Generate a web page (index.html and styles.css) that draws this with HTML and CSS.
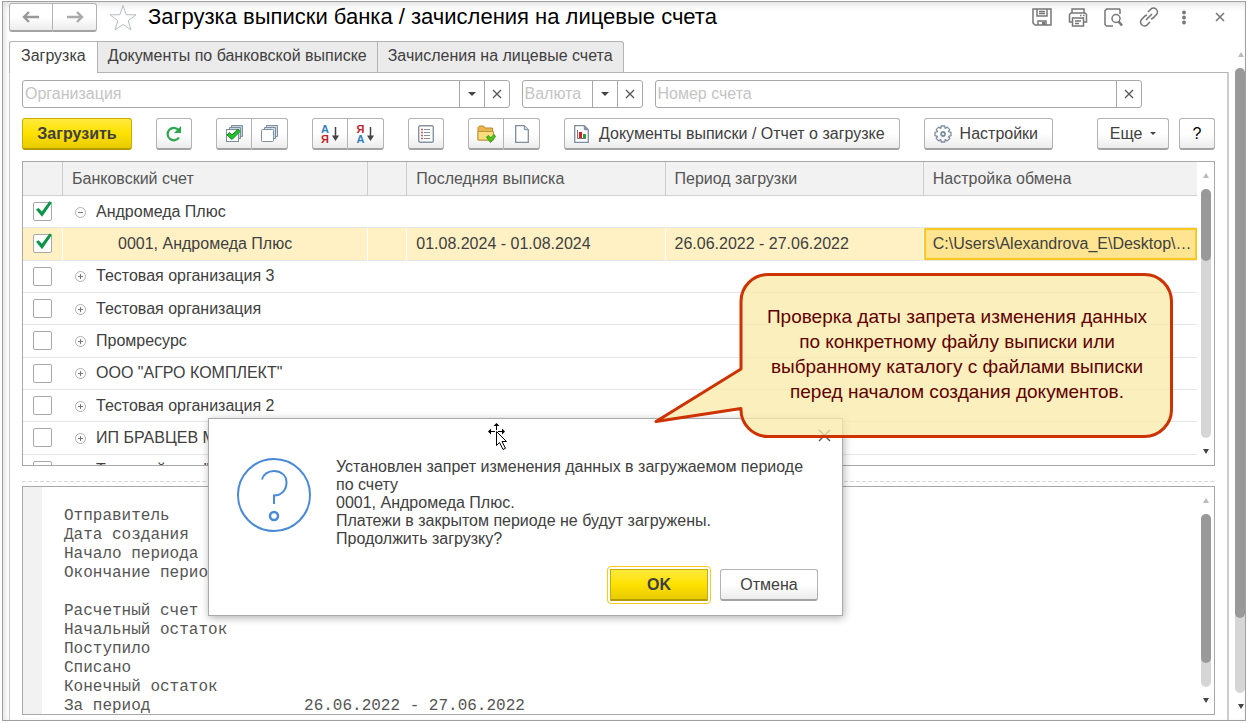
FILE: index.html
```html
<!DOCTYPE html>
<html lang="ru">

<head>
    <meta charset="UTF-8">
    <meta name="viewport" content="width=device-width, initial-scale=1.0">
    <title>Загрузка выписки банка</title>
    <link rel="stylesheet" href="styles.css">
</head>

<body>
    <div class="window">
        <header class="titlebar">
            <div class="group nav">
                <button class="btn" aria-label="Назад"><svg width="18" height="12" viewBox="0 0 18 12"><path d="M7 1L2 6l5 5M2 6h15" fill="none" stroke="#999" stroke-width="2.4"/></svg></button>
                <button class="btn" aria-label="Вперед"><svg width="18" height="12" viewBox="0 0 18 12"><path d="M11 1l5 5-5 5M16 6H1" fill="none" stroke="#aaa" stroke-width="2.4"/></svg></button>
            </div>
            <button class="icon star" aria-label="В избранное"><svg width="28" height="27" viewBox="0 0 28 27"><path d="M14 1.5l3.2 9.2 9.8.1-7.8 5.8 2.8 9.4-8-5.6L6 26l2.800-9.400L1 10.800l9.800-.1z" fill="#fff" stroke="#b4bcc4"/></svg></button>
            <h1>Загрузка выписки банка / зачисления на лицевые счета</h1>
            <div class="tools">
                <button class="icon" aria-label="Сохранить"><svg width="20" height="18" viewBox="0 0 20 18" fill="none" stroke="#777" stroke-width="1.5"><path d="M1 1h18v16H3l-2-2z"/><path d="M5 1v7h10V1M7 3.500h6M7 5.500h6M6 17v-4h8v4"/><path d="M10 14h3v3h-3z" fill="#777" stroke="none"/></svg></button>
                <button class="icon" aria-label="Печать"><svg width="20" height="19" viewBox="0 0 20 19" fill="none" stroke="#777" stroke-width="1.500"><path d="M4 5V1h12v4M4 14H1.500V6.500L3 5h14l1.500 1.500V14H16"/><path d="M4.500 10h11v8h-11zM7 13h6M7 15.500h4M12 7.500h1.500M15 7.500h1.500"/></svg></button>
                <button class="icon" aria-label="Просмотр"><svg width="19" height="19" viewBox="0 0 19 19" fill="none" stroke="#777" stroke-width="1.500"><path d="M9 18H2.500L1 16.500v-14L2.500 1h13L16 2v4"/><circle cx="12" cy="10.500" r="4"/><path d="M14.500 13.500l3.500 4" stroke-width="2.500"/></svg></button>
                <button class="icon" aria-label="Ссылка"><svg width="20" height="20" viewBox="0 0 20 20" fill="none" stroke="#777" stroke-width="1.600"><path d="M9 5l2.500-2.500a3.600 3.600 0 0 1 6 5L14 11l-2 1M11 15l-2.500 2.500a3.600 3.600 0 0 1-6-5L6 9l2-1M7 13l6-6"/></svg></button>
                <button class="icon dots" aria-label="Меню"><svg width="6" height="15" viewBox="0 0 6 15" fill="#777"><circle cx="3" cy="2.500" r="1.900"/><circle cx="3" cy="7.500" r="1.900"/><circle cx="3" cy="12.500" r="1.900"/></svg></button>
                <button class="icon close" aria-label="Закрыть"><svg width="10" height="10" viewBox="0 0 10 10"><path d="M1 1l8 8M9 1L1 9" stroke="#777" stroke-width="1.600"/></svg></button>
            </div>
        </header>

        <div class="page">
            <main class="content">
                <div class="tabs" role="tablist">
                    <button class="tab active" role="tab" aria-selected="true">Загрузка</button>
                    <button class="tab" role="tab">Документы по банковской выписке</button>
                    <button class="tab" role="tab">Зачисления на лицевые счета</button>
                </div>
                <section class="panel">
                    <div class="filters">
                        <div class="field wide">
                            <input type="text" placeholder="Организация" aria-label="Организация">
                            <button aria-label="Выбрать организацию"><i class="caret"></i></button>
                            <button aria-label="Очистить организацию"><svg width="10" height="10" viewBox="0 0 10 10"><path d="M1 1l8 8M9 1L1 9" stroke="#555" stroke-width="1.300"/></svg></button>
                        </div>
                        <div class="field">
                            <input type="text" placeholder="Валюта" aria-label="Валюта">
                            <button aria-label="Выбрать валюту"><i class="caret"></i></button>
                            <button aria-label="Очистить валюту"><svg width="10" height="10" viewBox="0 0 10 10"><path d="M1 1l8 8M9 1L1 9" stroke="#555" stroke-width="1.300"/></svg></button>
                        </div>
                        <div class="field wide">
                            <input type="text" placeholder="Номер счета" aria-label="Номер счета">
                            <button aria-label="Очистить номер счета"><svg width="10" height="10" viewBox="0 0 10 10"><path d="M1 1l8 8M9 1L1 9" stroke="#555" stroke-width="1.300"/></svg></button>
                        </div>
                    </div>

                    <div class="toolbar">
                        <button class="btn primary load">Загрузить</button>
                        <button class="btn square" aria-label="Обновить"><svg width="18" height="18" viewBox="0 0 18 18"><path d="M14 12.500A6.200 6.200 0 1 1 13.500 5" fill="none" stroke="#2ba84a" stroke-width="2.200"/><path d="M16 1v7H9z" fill="#2ba84a"/></svg></button>
                        <div class="group">
                            <button class="btn square" aria-label="Отметить все"><svg width="19" height="19" viewBox="0 0 19 19"><path d="M6.500 4V1.500h11v11H15M4.500 6V3.500h11v11H13" fill="#c6d2dc" stroke="#7d8e9e"/><rect x="1.500" y="5.500" width="12" height="12" fill="#fff" stroke="#7d8e9e"/><path d="M2 11l2.500-2.500L7 11l6-6 2 2.500-8 8z" fill="#1fc32a" stroke="#14851c"/></svg></button>
                            <button class="btn square" aria-label="Снять отметки"><svg width="19" height="19" viewBox="0 0 19 19"><path d="M6.500 4V1.500h11v11H15M4.500 6V3.500h11v11H13" fill="#d5dde4" stroke="#7d8e9e"/><rect x="1.500" y="5.500" width="12" height="12" rx="1" fill="#fff" stroke="#7d8e9e"/></svg></button>
                        </div>
                        <div class="group">
                            <button class="btn square sort" aria-label="Сортировать по возрастанию"><span><b>А</b><b class="red">Я</b></span><svg width="7" height="14" viewBox="0 0 7 14"><path d="M3.500 0v12" stroke="#444" stroke-width="1.500"/><path d="M0 8.500h7L3.500 14z" fill="#444"/></svg></button>
                            <button class="btn square sort" aria-label="Сортировать по убыванию"><span><b class="red">Я</b><b>А</b></span><svg width="7" height="14" viewBox="0 0 7 14"><path d="M3.500 0v12" stroke="#444" stroke-width="1.500"/><path d="M0 8.500h7L3.500 14z" fill="#444"/></svg></button>
                        </div>
                        <button class="btn square" aria-label="Список"><svg width="16" height="18" viewBox="0 0 16 18"><rect x=".7" y=".7" width="14.600" height="16.600" rx="1.500" fill="#fff" stroke="#8494a4" stroke-width="1.400"/><path d="M6 4.500h6M6 7.500h6M6 10.500h6M6 13.500h6" stroke="#8494a4"/><path d="M3 4.500h2M3 7.500h2M3 10.500h2M3 13.500h2" stroke="#e0525a" stroke-width="1.300"/></svg></button>
                        <div class="group">
                            <button class="btn square" aria-label="Выбрать файл"><svg width="19" height="18" viewBox="0 0 19 18"><path d="M1 15V2.500L2.500 1h4L8 3h7.500v12z" fill="#e9b64b" stroke="#b98a2b"/><path d="M1 15V6.500h15.500V15z" fill="#fbdc7e" stroke="#c0963a"/><path d="M9.500 12l2-1.500 2 2.500 3.500-3.500 1.500 2-5 6z" fill="#4cc417" stroke="#2f9a0e"/></svg></button>
                            <button class="btn square" aria-label="Новый документ"><svg width="14" height="18" viewBox="0 0 14 18"><path d="M.7.7h8.600l4 4v12.600H.7z" fill="#fff" stroke="#7d8e9e" stroke-width="1.300"/><path d="M9.300.7v4h4" fill="#d5dde4" stroke="#7d8e9e"/></svg></button>
                        </div>
                        <button class="btn text"><svg width="15" height="18" viewBox="0 0 15 18"><path d="M.7.7h9.600l4 4v12.600H.7z" fill="#fff" stroke="#7d8e9e" stroke-width="1.300"/><path d="M10.300.7v4h4" fill="#8494a4" stroke="#7d8e9e"/><path d="M5 7h3v6H5z" fill="#e01b24"/><path d="M9 9h3v4H9z" fill="#2ea043"/><path d="M3.500 5v8.500H12" fill="none" stroke="#777"/></svg>Документы выписки / Отчет о загрузке</button>
                        <button class="btn text settings"><svg width="18" height="18" viewBox="0 0 18 18" fill="none" stroke="#7d8e9e" stroke-width="1.300"><path d="M7.300 1h3.400l.5 2.400 2.100-1.300 2.500 2.500-1.300 2.100 2.500.6v3.400l-2.500.6 1.300 2.100-2.500 2.500-2.100-1.300-.5 2.400H7.300l-.5-2.400-2.100 1.300-2.500-2.500 1.300-2.100L1 10.700V7.300l2.500-.6-1.300-2.100 2.500-2.500 2.100 1.300z" stroke-linejoin="round"/><circle cx="9" cy="9" r="2" stroke-width="1.800"/></svg>Настройки</button>
                        <button class="btn more">Еще <i class="caret small"></i></button>
                        <button class="btn square help">?</button>
                    </div>

                    <div class="pane list">
                        <div class="view">
                            <table>
                                <colgroup>
                                    <col class="c-check">
                                    <col class="c-account">
                                    <col class="c-mark">
                                    <col class="c-date">
                                    <col class="c-date">
                                    <col>
                                </colgroup>
                                <thead>
                                    <tr>
                                        <th></th>
                                        <th>Банковский счет</th>
                                        <th></th>
                                        <th>Последняя выписка</th>
                                        <th>Период загрузки</th>
                                        <th>Настройка обмена</th>
                                    </tr>
                                </thead>
                                <tbody>
                                    <tr>
                                        <td class="check"><input type="checkbox" aria-label="Андромеда Плюс" checked></td>
                                        <td colspan="5"><button class="toggle open" aria-label="Свернуть"></button>Андромеда Плюс</td>
                                    </tr>
                                    <tr class="selected">
                                        <td class="check"><input type="checkbox" aria-label="0001, Андромеда Плюс" checked></td>
                                        <td class="child">0001, Андромеда Плюс</td>
                                        <td></td>
                                        <td>01.08.2024 - 01.08.2024</td>
                                        <td>26.06.2022 - 27.06.2022</td>
                                        <td class="current">C:\Users\Alexandrova_E\Desktop\…</td>
                                    </tr>
                                    <tr>
                                        <td class="check"><input type="checkbox" aria-label="Тестовая организация 3"></td>
                                        <td colspan="5"><button class="toggle" aria-label="Развернуть"></button>Тестовая организация 3</td>
                                    </tr>
                                    <tr>
                                        <td class="check"><input type="checkbox" aria-label="Тестовая организация"></td>
                                        <td colspan="5"><button class="toggle" aria-label="Развернуть"></button>Тестовая организация</td>
                                    </tr>
                                    <tr>
                                        <td class="check"><input type="checkbox" aria-label="Промресурс"></td>
                                        <td colspan="5"><button class="toggle" aria-label="Развернуть"></button>Промресурс</td>
                                    </tr>
                                    <tr>
                                        <td class="check"><input type="checkbox" aria-label="ООО АГРО КОМПЛЕКТ"></td>
                                        <td colspan="5"><button class="toggle" aria-label="Развернуть"></button>ООО "АГРО КОМПЛЕКТ"</td>
                                    </tr>
                                    <tr>
                                        <td class="check"><input type="checkbox" aria-label="Тестовая организация 2"></td>
                                        <td colspan="5"><button class="toggle" aria-label="Развернуть"></button>Тестовая организация 2</td>
                                    </tr>
                                    <tr>
                                        <td class="check"><input type="checkbox" aria-label="ИП БРАВЦЕВ"></td>
                                        <td colspan="5"><button class="toggle" aria-label="Развернуть"></button>ИП БРАВЦЕВ М</td>
                                    </tr>
                                    <tr>
                                        <td class="check"><input type="checkbox" aria-label="Торговый дом"></td>
                                        <td colspan="5"><button class="toggle" aria-label="Развернуть"></button>Торговый дом "</td>
                                    </tr>
                                </tbody>
                            </table>
                        </div>
                        <div class="scroll">
                            <i class="up"></i>
                            <div class="track"><div class="thumb" style="height: 29%"></div></div>
                            <i class="down"></i>
                        </div>
                    </div>

                    <div class="splitter"></div>

                    <div class="pane report">
                        <div class="gutter"></div>
                        <pre>Отправитель
Дата создания
Начало периода
Окончание периода

Расчетный счет
Начальный остаток
Поступило
Списано
Конечный остаток
За период                26.06.2022 - 27.06.2022</pre>
                        <div class="scroll">
                            <i class="up"></i>
                            <div class="track"><div class="thumb" style="height: 86%"></div></div>
                            <i class="down"></i>
                        </div>
                    </div>
                </section>
            </main>
            <div class="scroll outer">
                <i class="up"></i>
                <div class="track"><div class="thumb" style="height: 88%"></div></div>
                <i class="down"></i>
            </div>
        </div>
    </div>

    <div class="dialog" role="dialog" aria-label="Вопрос">
        <button class="icon dialog-close" aria-label="Закрыть"><svg width="13" height="13" viewBox="0 0 13 13"><path d="M1 1l11 11M12 1L1 12" stroke="#555" stroke-width="1.400"/></svg></button>
        <div class="message">
            <svg width="74" height="74" viewBox="0 0 74 74" fill="none" stroke="#4a8ad4" stroke-width="2"><circle cx="37" cy="37" r="36"/><path d="M25 21.500c1-5 6-8.500 12-8.500 7 0 12.500 4.500 12.500 11.500S45 37.500 37 37.500V46"/><circle cx="37" cy="58" r="4" stroke-width="2.500"/></svg>
            <p>Установлен запрет изменения данных в загружаемом периоде по счету<br>0001, Андромеда Плюс.<br>Платежи в закрытом периоде не будут загружены.<br>Продолжить загрузку?</p>
        </div>
        <div class="actions">
            <button class="btn primary ok">OK</button>
            <button class="btn cancel">Отмена</button>
        </div>
    </div>

    <svg class="cursor" width="22" height="30" viewBox="0 0 22 30">
        <path d="M8.500 1L5.500 4H8v4h1V4h2.500zM0 9.500l3-3V9h4v1H3v2.500zM17 9.500l-3-3V9h-4v1h4v2.500z" fill="#000"/>
        <path d="M8.500 9.500v14l3-3 3.500 7 2.500-1.200-3.500-6.800h4.500z" fill="#fff" stroke="#000"/>
    </svg>

    <div class="callout">
        <svg width="520" height="168" viewBox="0 0 520 168"><path d="M115 2.500H491.500a27 27 0 0 1 27 27V137a27 27 0 0 1-27 27.500H115a27 27 0 0 1-27-28L3 149.500 88 97V29.500a27 27 0 0 1 27-27z" fill="#faeaa8" fill-opacity=".75"/><path d="M115 2.500H491.500a27 27 0 0 1 27 27V137a27 27 0 0 1-27 27.500H115a27 27 0 0 1-27-28L3 149.500 88 97V29.500a27 27 0 0 1 27-27z" fill="none" stroke="#cc3300" stroke-width="3" stroke-linejoin="round"/></svg>
        <p>Проверка даты запрета изменения данных<br>по конкретному файлу выписки или<br>выбранному каталогу с файлами выписки<br>перед началом создания документов.</p>
    </div>
</body>

</html>
```

FILE: styles.css
```css
* {
    box-sizing: border-box;
}

body,
h1,
p,
pre {
    margin: 0;
    padding: 0;
}

body {
    height: 100vh;
    overflow: hidden;
    padding: 1px 2px 2px;
    background: #fff;
    color: #404040;
    font: 16px/18px "Liberation Sans", Arial, sans-serif;
}

button,
input {
    font: inherit;
    color: inherit;
    padding: 0;
}

svg {
    display: block;
    flex: none;
}

.window {
    height: 100%;
    display: flex;
    flex-direction: column;
    border: 1px solid #a0a0a0;
    box-shadow: inset 0 6px 8px -4px #ddd, inset 4px 0 6px -3px #ddd;
    overflow: hidden;
}

/* title */
.titlebar {
    display: flex;
    flex: none;
    align-items: center;
    height: 30px;
    padding: 0 20px 0 6px;
}

.titlebar .nav .btn {
    width: 44px;
    height: 29px;
}

.icon {
    display: flex;
    align-items: center;
    justify-content: center;
    background: none;
    border: 0;
}

.star {
    margin: 0 11px 0 12px;
}

h1 {
    color: #000;
    font-size: 22px;
    line-height: 28px;
    font-weight: normal;
    white-space: nowrap;
}

.tools {
    display: flex;
    align-items: center;
    gap: 16px;
    margin-left: auto;
}

.dots {
    margin-left: 6px;
}

.close {
    margin-left: 12px;
}

/* buttons */
.btn {
    display: flex;
    align-items: center;
    justify-content: center;
    height: 32px;
    border: 1px solid #b3b3b3;
    border-bottom: 2px solid #a3a3a3;
    border-radius: 3px;
    background: linear-gradient(#fff 50%, #ececec);
    white-space: nowrap;
}

.square {
    width: 36px;
}

.group {
    display: flex;
}

.group .btn:first-child {
    border-radius: 3px 0 0 3px;
}

.group .btn:last-child {
    border-left: 0;
    border-radius: 0 3px 3px 0;
}

.primary {
    border-color: #c9ae00;
    border-bottom-color: #b39b00;
    background: linear-gradient(#ffea3d, #ffe100 50%, #e8cb00);
    font-weight: bold;
}

.text {
    gap: 10px;
    padding: 0 14px 0 9px;
}

.settings {
    gap: 8px;
}

.more {
    gap: 8px;
    width: 72px;
    margin-left: auto;
}

.help {
    margin-left: -14px;
    color: #000;
}

.load {
    width: 110px;
}

.caret {
    border: 4px solid transparent;
    border-top-color: #444;
    border-bottom: 0;
}

.caret.small {
    border-width: 3px 3px 0;
}

.sort {
    gap: 3px;
}

.sort b {
    display: block;
    font-size: 11px;
    line-height: 10px;
    color: #2f7fc0;
}

.sort .red {
    color: #c0242c;
}

/* tabs and panel */
.page {
    display: flex;
    flex: 1;
    min-height: 0;
    padding-left: 6px;
}

.content {
    display: flex;
    flex: 1;
    flex-direction: column;
    min-width: 0;
    padding-top: 9px;
}

.tabs {
    display: flex;
    flex: none;
    height: 31px;
}

.tab {
    padding: 0 10px 2px;
    border: 1px solid #b3b3b3;
    border-left-width: 0;
    border-bottom: 0;
    background: #ebebeb;
    white-space: nowrap;
}

.tab.active {
    padding: 0 11px 3px;
    border-left-width: 1px;
    border-radius: 3px 0 0;
    background: #fff;
    margin-bottom: -1px;
    z-index: 1;
}

.tab:last-child {
    border-radius: 0 3px 0 0;
}

.panel {
    display: flex;
    flex: 1;
    flex-direction: column;
    min-height: 0;
    padding: 7px 12px 5px;
    border: 1px solid #b3b3b3;
    border-width: 1px 2px 0 1px;
    border-right-color: #ccc;
    border-left-color: #ccc;
}

.filters {
    display: flex;
    flex: none;
    gap: 12px;
    padding-right: 73px;
}

.field {
    display: flex;
    width: 121px;
    height: 28px;
    border: 1px solid #a8a8a8;
    border-radius: 3px;
}

.field.wide {
    flex: 1;
}

.field input {
    flex: 1;
    min-width: 0;
    padding: 0 2px;
    border: 0;
    background: none;
}

.field input::placeholder {
    color: #c4c4c4;
}

.field button {
    display: flex;
    align-items: center;
    justify-content: center;
    width: 25px;
    border: 0;
    border-left: 1px solid #a8a8a8;
    background: none;
}

.toolbar {
    display: flex;
    flex: none;
    gap: 24px;
    padding: 10px 0 11px;
}

/* panes */
.pane {
    display: flex;
    border: 1px solid #a8a8a8;
    overflow: hidden;
}

.list {
    flex: none;
    height: 305px;
}

.view {
    flex: 1;
    min-width: 0;
    overflow: hidden;
}

table {
    width: 100%;
    height: 325px;
    table-layout: fixed;
    border-collapse: separate;
    border-spacing: 0;
}

.c-check {
    width: 40px;
}

.c-account {
    width: 26%;
}

.c-mark {
    width: 39px;
}

.c-date {
    width: 22%;
}

th,
td {
    padding: 0 9px;
    overflow: hidden;
    text-align: left;
    text-overflow: ellipsis;
    white-space: nowrap;
    font-weight: normal;
}

th {
    height: 34px;
    color: #555;
    background: #f2f2f2;
    border-right: 1px solid #ccc;
    border-bottom: 1px solid #d0d0d0;
}

th:last-child {
    border-right: 0;
}

td {
    border-bottom: 1px solid #e6e6e6;
}

.selected td {
    background: #fff1c4;
    border-right: 1px solid #fff;
}

.child {
    padding-left: 55px;
}

.selected .current {
    padding-right: 3px;
    border-right: 0;
    background: #ffe591;
    box-shadow: inset 0 0 0 2px #fac81e;
}

.check {
    padding: 0 0 0 10px;
    line-height: 0;
}

.check input {
    position: relative;
    appearance: none;
    width: 19px;
    height: 19px;
    margin: 0;
    border: 1px solid #a8a8a8;
    border-radius: 2px;
    background: #fff;
}

.check input:checked::after {
    content: "";
    position: absolute;
    left: 2px;
    top: -2px;
    width: 16px;
    height: 16px;
    background: #0a9648;
    clip-path: polygon(0 52%, 16% 42%, 37% 64%, 84% 0, 100% 8%, 38% 98%);
}

.toggle {
    width: 11px;
    height: 11px;
    margin: 0 10px 0 3px;
    border: 1px solid #b0b0b0;
    border-radius: 50%;
    background: linear-gradient(#777, #777) center / 5px 1px no-repeat, linear-gradient(#777, #777) center / 1px 5px no-repeat;
}

.toggle.open {
    background: linear-gradient(#777, #777) center / 5px 1px no-repeat;
}

.splitter {
    flex: none;
    height: 20px;
    border-bottom: 4px solid transparent;
    background: repeating-linear-gradient(90deg, #d6d6d6 0 4px, transparent 4px 6px) bottom / 100% 1px no-repeat padding-box;
}

.report {
    flex: 1;
    min-height: 0;
}

.gutter {
    width: 19px;
    background: #f2f2f2;
}

pre {
    flex: 1;
    padding: 20px 0 0 22px;
    color: #555;
    font: 16px/19px "Liberation Mono", "Courier New", monospace;
}

.scroll {
    display: flex;
    flex: none;
    flex-direction: column;
    align-items: center;
    width: 17px;
}

.scroll .up,
.scroll .down {
    margin: 11px 0;
    border: 3px solid transparent;
    border-top: 0;
    border-bottom: 5px solid #bbb;
}

.scroll .down {
    border-top: 5px solid #444;
    border-bottom: 0;
}

.track {
    flex: 1;
    width: 10px;
    border-radius: 5px;
    background: #d6d6d6;
}

.thumb {
    border-radius: 5px;
    background: #999;
}

.outer {
    padding-top: 9px;
    width: 16px;
    align-items: flex-end;
}

.outer .up,
.outer .down {
    margin-right: 1px;
}

/* question box */
.dialog {
    position: absolute;
    left: 208px;
    top: 418px;
    width: 635px;
    padding: 10px 24px 14px 28px;
    border: 1px solid #aaa;
    background: #fff;
    box-shadow: 1px 2px 8px rgba(0, 0, 0, .3);
}

.dialog-close {
    margin: 0 -13px 0 auto;
}

.message {
    display: flex;
    gap: 25px;
    padding: 16px 0 21px;
}

.message p {
    flex: 1;
}

.actions {
    display: flex;
    gap: 12px;
    justify-content: flex-end;
}

.actions .btn {
    width: 98px;
}

.actions .ok {
    border-radius: 1px;
    outline: 1px solid #fac81e;
    outline-offset: 2px;
}

.cursor {
    position: absolute;
    left: 488px;
    top: 422px;
}

/* note */
.callout {
    position: absolute;
    left: 653px;
    top: 272px;
}

.callout p {
    position: absolute;
    left: 88px;
    right: 0;
    top: 32px;
    color: #600000;
    font-size: 19px;
    line-height: 25px;
    text-align: center;
    white-space: nowrap;
}
```
